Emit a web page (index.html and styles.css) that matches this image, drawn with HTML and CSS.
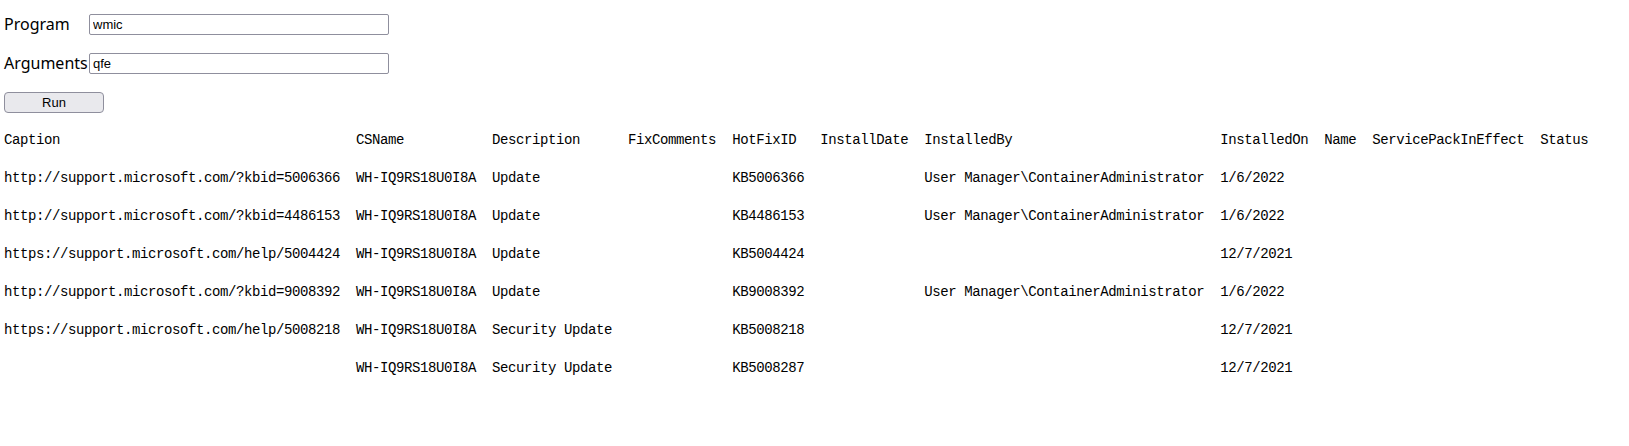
FILE: index.html
```html
<!DOCTYPE html>
<html>
<head>
<meta charset="utf-8">
<title>Run</title>
<link rel="stylesheet" href="styles.css">
</head>
<body>
<div class="page">
  <form class="form">
    <div class="field">
      <label class="label" for="program">Program</label>
      <input class="input" id="program" type="text" value="wmic">
    </div>
    <div class="field">
      <label class="label" for="args">Arguments</label>
      <input class="input" id="args" type="text" value="qfe">
    </div>
    <div class="actions">
      <button class="btn" type="button">Run</button>
    </div>
  </form>
<pre class="output">Caption                                     CSName           Description      FixComments  HotFixID   InstallDate  InstalledBy                          InstalledOn  Name  ServicePackInEffect  Status

http://support.microsoft.com/?kbid=5006366  WH-IQ9RS18U0I8A  Update                        KB5006366               User Manager\ContainerAdministrator  1/6/2022

http://support.microsoft.com/?kbid=4486153  WH-IQ9RS18U0I8A  Update                        KB4486153               User Manager\ContainerAdministrator  1/6/2022

https://support.microsoft.com/help/5004424  WH-IQ9RS18U0I8A  Update                        KB5004424                                                    12/7/2021

http://support.microsoft.com/?kbid=9008392  WH-IQ9RS18U0I8A  Update                        KB9008392               User Manager\ContainerAdministrator  1/6/2022

https://support.microsoft.com/help/5008218  WH-IQ9RS18U0I8A  Security Update               KB5008218                                                    12/7/2021

                                            WH-IQ9RS18U0I8A  Security Update               KB5008287                                                    12/7/2021
</pre>
</div>
</body>
</html>
```
FILE: styles.css
```css
html, body {
  margin: 0;
  padding: 0;
  background: #ffffff;
  color: #000000;
}

.page {
  padding: 14px 4px 0 4px;
}

.form {
  display: flex;
  flex-direction: column;
  gap: 18px;
  margin: 0;
}

.field {
  display: flex;
  align-items: center;
  height: 21px;
}

.label {
  flex: 0 0 85px;
  width: 85px;
  white-space: nowrap;
  font-family: "Noto Sans", "Open Sans", sans-serif;
  font-size: 16px;
  line-height: 21px;
  color: #000;
}

.input {
  box-sizing: border-box;
  width: 300px;
  height: 21px;
  margin: 0;
  padding: 0 3px;
  border: 1px solid #8f8f9d;
  border-radius: 2px;
  background: #fff;
  font-family: "Liberation Sans", Arial, sans-serif;
  font-size: 13px;
  color: #000;
  outline: none;
}

.actions {
  display: flex;
  height: 21px;
}

.btn {
  box-sizing: border-box;
  width: 100px;
  height: 21px;
  margin: 0;
  padding: 0;
  border: 1px solid #8f8f9d;
  border-radius: 4px;
  background: #e9e9ed;
  font-family: "Liberation Sans", Arial, sans-serif;
  font-size: 13px;
  color: #000;
}

.output {
  margin: 18px 0 0 0;
  font-family: "Liberation Mono", "Courier New", monospace;
  font-size: 14px;
  letter-spacing: -0.4px;
  line-height: 19px;
  color: #000;
}
```
